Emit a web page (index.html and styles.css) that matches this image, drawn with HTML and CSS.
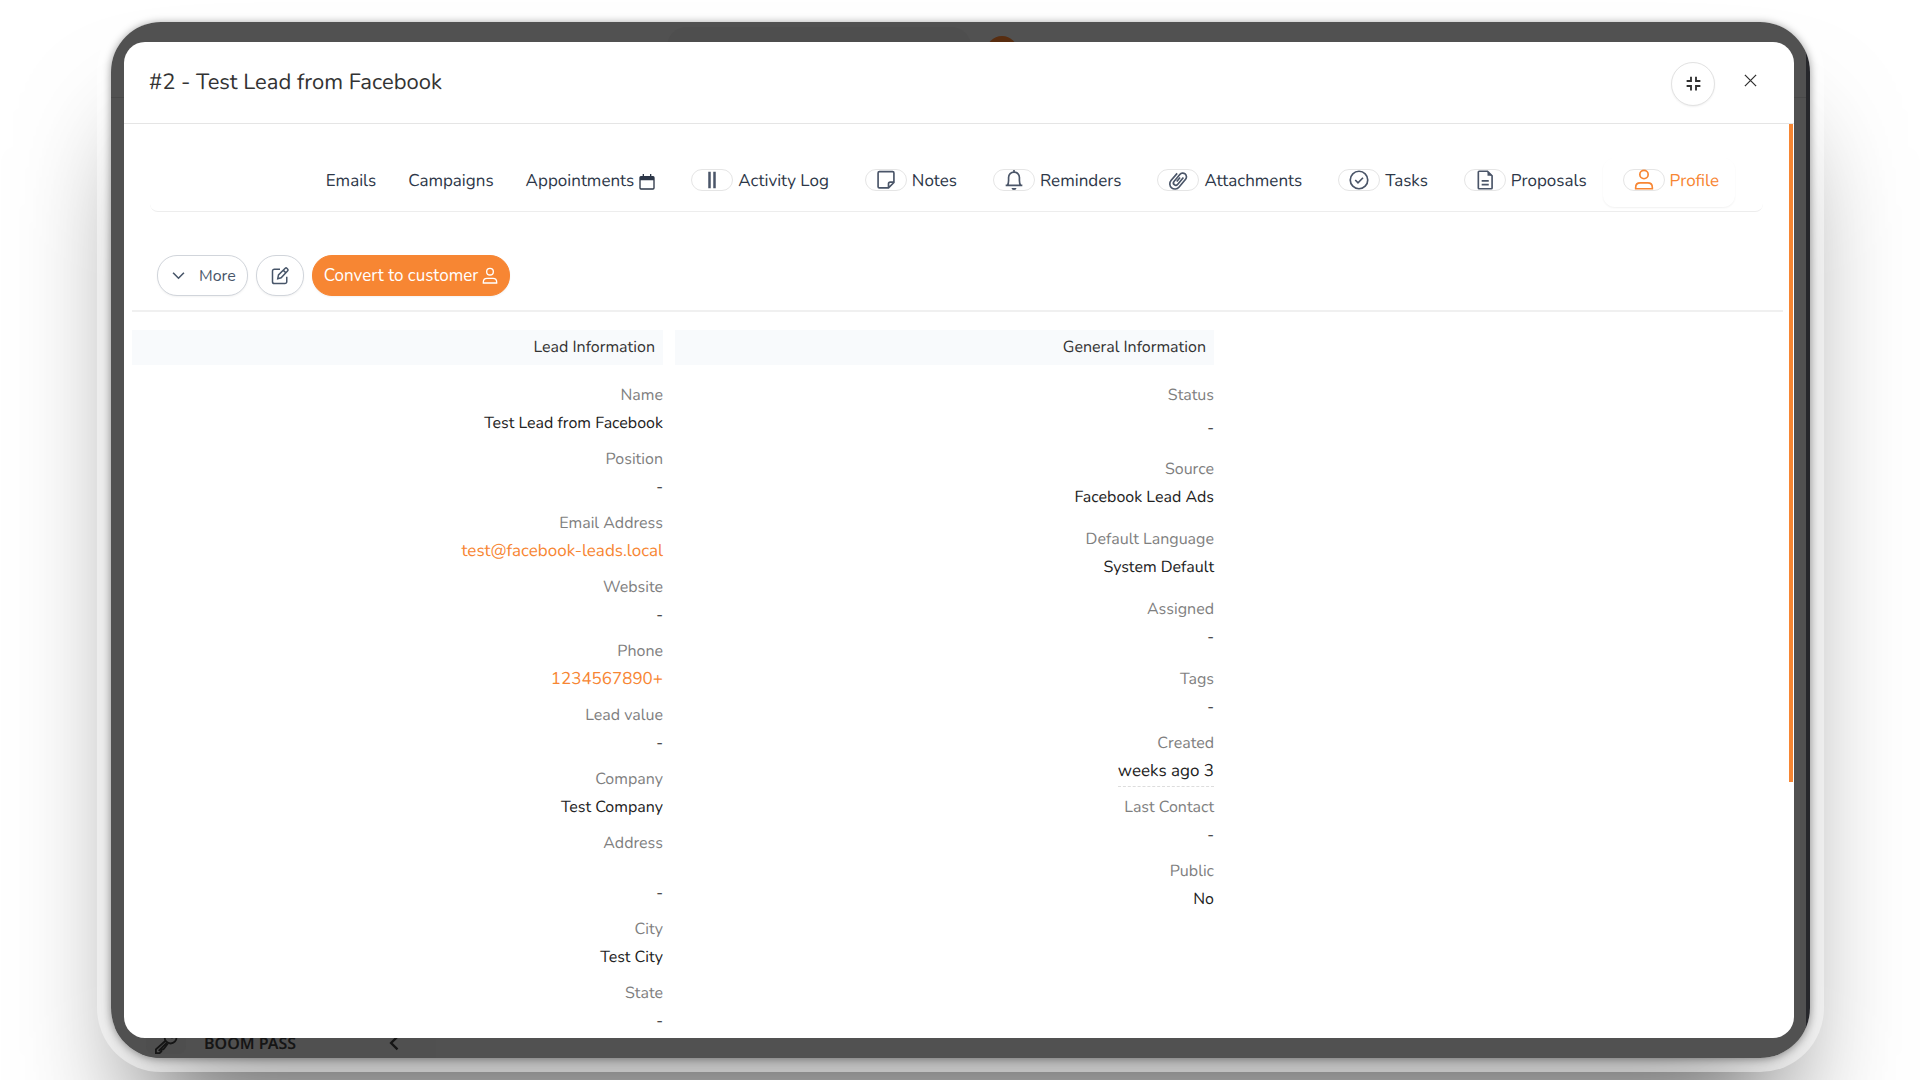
FILE: index.html
```html
<!DOCTYPE html>
<html lang="en">
<head>
    <meta charset="UTF-8">
    <meta name="viewport" content="width=device-width, initial-scale=1.0">
    <title>#2 - Test Lead from Facebook</title>
    <link rel="stylesheet" href="styles.css">
</head>
<body>

    <div class="frame">
        <!-- CRM page behind the modal -->
        <div class="app">
            <div class="topbar">
                <div class="search"></div>
                <div class="add"></div>
            </div>
            <div class="sidebar">
                <a href="#" class="menu-item">
                    <span class="menu-icon">
                        <svg viewBox="0 0 24 24"><circle cx="17" cy="6" r="6.500"/><path d="M11.500 9.500 1 19v4h4l2-2v-2h2l1-1 4-5.500M4 20.500l9-9"/><circle cx="18.500" cy="4.500" r="1.500"/></svg>
                    </span>
                    <span>BOOM PASS</span>
                    <svg class="menu-arrow" viewBox="0 0 24 24"><path d="M18 1 7 12l11 11"/></svg>
                </a>
            </div>
        </div>

        <div class="modal" role="dialog" aria-labelledby="lead-title">
            <div class="modal-header">
                <h4 id="lead-title">#2 - Test Lead from Facebook</h4>
                <button type="button" class="shrink" aria-label="Shrink">
                    <svg viewBox="0 0 24 24"><path d="M8 1v7H1M16 1v7h7M8 23v-7H1M16 23v-7h7"/></svg>
                </button>
                <button type="button" class="close" aria-label="Close">
                    <svg viewBox="0 0 24 24"><path d="M3 3l18 18M21 3 3 21"/></svg>
                </button>
            </div>

            <div class="modal-body">
                <nav class="tabs">
                    <a href="#">Emails</a>
                    <a href="#">Campaigns</a>
                    <a href="#">Appointments
                        <svg class="calendar" viewBox="0 0 24 24"><path d="M3 4h18a1.500 1.500 0 0 1 1.500 1.500V21a1.500 1.500 0 0 1-1.500 1.500H3A1.500 1.500 0 0 1 1.500 21V5.500A1.500 1.500 0 0 1 3 4zM6.500 0v5M17.500 0v5"/><path class="solid" d="M1.500 4h21v5.500h-21z"/></svg>
                    </a>
                    <a href="#">
                        <span class="pill"><svg viewBox="0 0 24 24"><path class="thick" d="M9 2v20M15 2v20"/></svg></span>
                        Activity Log
                    </a>
                    <a href="#">
                        <span class="pill"><svg viewBox="0 0 24 24"><path d="M4 2h16a1.500 1.500 0 0 1 1.500 1.500V15L15 21.500H4A1.500 1.500 0 0 1 2.500 20V3.500A1.500 1.500 0 0 1 4 2zM21.500 14.500H17a2 2 0 0 0-2 2v5"/></svg></span>
                        Notes
                    </a>
                    <a href="#">
                        <span class="pill"><svg viewBox="0 0 24 24"><path d="M12 0v2.500M2 18.500h20M4 18.500c1-1.500 1.500-3 1.500-6V9a6.500 6.500 0 0 1 13 0v3.500c0 3 .5 4.500 1.500 6"/><path class="solid" d="M9 21.500h6a3 2.500 0 0 1-6 0z"/></svg></span>
                        Reminders
                    </a>
                    <a href="#">
                        <span class="pill"><svg viewBox="0 0 24 24"><path d="M18.500 9l-7 8.300a2.800 2.800 0 0 1-4.300-3.600l7-8.400a4.500 4.500 0 0 1 6.900 5.800l-8 9.500a6.200 6.200 0 0 1-9.500-8L11 4M14.500 9l-4 4.800"/></svg></span>
                        Attachments
                    </a>
                    <a href="#">
                        <span class="pill"><svg viewBox="0 0 24 24"><circle cx="12" cy="12" r="10.500"/><path d="M7.500 12l3.300 3.300 6-6"/></svg></span>
                        Tasks
                    </a>
                    <a href="#">
                        <span class="pill"><svg viewBox="0 0 24 24"><path d="M5 1.500h10l5.500 5.500v14.500a1 1 0 0 1-1 1H5a1 1 0 0 1-1-1v-19a1 1 0 0 1 1-1zM8 13h8.500M8 17.500h8.500"/><path class="solid" d="M15 1.500V7h5.500z"/></svg></span>
                        Proposals
                    </a>
                    <a href="#" class="active">
                        <span class="pill"><svg viewBox="0 0 24 24"><circle cx="12" cy="5.500" r="5"/><path d="M2 22.500v-1.500c0-3.500 2.500-5.500 5.500-5.500h9c3 0 5.500 2 5.500 5.500v1.500z"/></svg></span>
                        Profile
                    </a>
                </nav>

                <div class="actions">
                    <button type="button" class="btn more">
                        <svg class="caret" viewBox="0 0 24 24"><path d="M2 7l10 10L22 7"/></svg>
                        More
                    </button>
                    <button type="button" class="btn edit" aria-label="Edit">
                        <svg viewBox="0 0 24 24"><path d="M12 3H4.500A2.500 2.500 0 0 0 2 5.500v14A2.500 2.500 0 0 0 4.500 22h14a2.500 2.500 0 0 0 2.500-2.500V13M9 15.500l1-5L19 1.700a1.500 1.500 0 0 1 2.100 0l1.200 1.200a1.500 1.500 0 0 1 0 2.100L13.500 14.300zM16.500 4.500l3.200 3.200"/></svg>
                    </button>
                    <button type="button" class="btn convert">
                        Convert to customer
                        <svg viewBox="0 0 24 24"><circle cx="12" cy="5.500" r="5"/><path d="M2 22.500v-1.500c0-3.500 2.500-5.500 5.500-5.500h9c3 0 5.500 2 5.500 5.500v1.500z"/></svg>
                    </button>
                </div>

                <div class="info">
                    <section>
                        <h5>Lead Information</h5>
                        <dl>
                            <dt>Name</dt>
                            <dd>Test Lead from Facebook</dd>
                            <dt>Position</dt>
                            <dd>-</dd>
                            <dt>Email Address</dt>
                            <dd><a href="#">test@facebook-leads.local</a></dd>
                            <dt>Website</dt>
                            <dd>-</dd>
                            <dt>Phone</dt>
                            <dd><a href="#">1234567890+</a></dd>
                            <dt>Lead value</dt>
                            <dd>-</dd>
                            <dt>Company</dt>
                            <dd>Test Company</dd>
                            <dt>Address</dt>
                            <dd class="address">-</dd>
                            <dt>City</dt>
                            <dd>Test City</dd>
                            <dt>State</dt>
                            <dd>-</dd>
                        </dl>
                    </section>
                    <section>
                        <h5>General Information</h5>
                        <dl>
                            <dt>Status</dt>
                            <dd class="status">-</dd>
                            <dt>Source</dt>
                            <dd class="spaced">Facebook Lead Ads</dd>
                            <dt>Default Language</dt>
                            <dd class="spaced">System Default</dd>
                            <dt>Assigned</dt>
                            <dd class="spaced">-</dd>
                            <dt>Tags</dt>
                            <dd>-</dd>
                            <dt>Created</dt>
                            <dd><span class="time-ago">weeks ago 3</span></dd>
                            <dt>Last Contact</dt>
                            <dd>-</dd>
                            <dt>Public</dt>
                            <dd>No</dd>
                        </dl>
                    </section>
                </div>

                <div class="scrollbar"></div>
            </div>
        </div>
    </div>

</body>
</html>
```

FILE: styles.css
```css
* {
    box-sizing: border-box;
}
body {
    margin: 0;
    padding: 22px 110px 22px 111px;
    height: 100vh;
    overflow: hidden;
    background: #fff;
    font-family: Nunito, Lato, sans-serif;
    font-size: 17px;
    line-height: 28px;
    color: #222;
    text-rendering: geometricPrecision;
}
a {
    color: #f78633;
    text-decoration: none;
}
svg {
    width: 18px;
    height: 18px;
    flex-shrink: 0;
    fill: none;
    stroke: currentColor;
    stroke-width: 2;
    overflow: visible;
}
svg .solid {
    fill: currentColor;
    stroke: none;
}
svg .thick {
    stroke-width: 3;
}
button {
    font: inherit;
    cursor: pointer;
}

/* device frame */
.frame {
    display: grid;
    grid-template: minmax(0, 1fr) / minmax(0, 1fr);
    height: 100%;
    border-radius: 50px;
    background: linear-gradient(to left, #26272b 4px, #515151 4px);
    overflow: hidden;
    box-shadow:
        0 1px 8px rgba(0, 0, 0, 0.4),
        0 0 0 14px rgba(255, 255, 255, 0.45),
        0 90px 120px -34px rgba(0, 0, 0, 0.6);
}
.app,
.modal {
    grid-area: 1 / 1;
}
.app {
    display: flex;
    flex-direction: column;
    justify-content: space-between;
    margin-right: 4px;
}
.topbar {
    display: flex;
    align-items: flex-start;
    gap: 15px;
    height: 76px;
    padding: 5px 0 0 556px;
    border-bottom: 1px solid #494949;
}
.search {
    width: 304px;
    height: 50px;
    border-radius: 20px;
    background: #4e4e4e;
}
.add {
    width: 32px;
    height: 32px;
    margin-top: 9px;
    border-radius: 50%;
    background: #582d10;
}
.sidebar {
    width: 325px;
    padding: 0 35px;
    background: #505050;
}
.menu-item {
    display: flex;
    align-items: center;
    height: 30px;
    font: 600 16px/30px "Noto Sans", sans-serif;
    color: #151515;
}
.menu-icon {
    display: flex;
    justify-content: center;
    width: 40px;
    margin-right: 18px;
    border-radius: 8px;
    background: #4e4e4e;
}
.menu-icon svg {
    width: 22px;
    height: 22px;
    stroke-width: 2;
}
.menu-arrow {
    width: 14px;
    height: 14px;
    margin-left: auto;
    stroke-width: 4;
}

/* modal */
.modal {
    display: flex;
    flex-direction: column;
    margin: 20px 16px 20px 13px;
    border-radius: 21px;
    background: #fff;
    overflow: hidden;
}
.modal-header {
    display: flex;
    align-items: center;
    height: 82px;
    padding: 0 36px 2px 25px;
    border-bottom: 1px solid #e5e5e5;
    flex-shrink: 0;
}
.modal-header h4 {
    margin: 0 auto 0 0;
    font-size: 22px;
    font-weight: 400;
    color: #333;
}
.shrink {
    display: flex;
    align-items: center;
    justify-content: center;
    width: 44px;
    height: 44px;
    margin-top: 4px;
    border: 1px solid #e2e2e2;
    border-radius: 50%;
    background: #fff;
    color: #333;
    box-shadow: 0 1px 2px rgba(0, 0, 0, 0.06);
}
.shrink svg {
    width: 15px;
    height: 15px;
    stroke-width: 3;
}
.close {
    display: flex;
    margin: 0 0 2px 28px;
    padding: 0;
    border: 0;
    background: none;
    color: #333;
}
.close svg {
    width: 15px;
    height: 15px;
    stroke-width: 2;
}
.modal-body {
    position: relative;
    flex: 1;
    min-height: 0;
    padding: 34px 11px 0 8px;
}

/* tabs */
.tabs {
    display: flex;
    justify-content: flex-end;
    height: 54px;
    margin: 0 20px 0 18px;
    padding: 0 28px 4px 0;
    border-bottom: 1px solid #ededed;
    border-radius: 8px;
}
.tabs a {
    display: flex;
    align-items: center;
    gap: 5px;
    padding: 0 16px 1px;
    border-radius: 12px;
    color: #2d3748;
    white-space: nowrap;
}
.tabs .active {
    color: #f78633;
    box-shadow: 0 1px 2px rgba(0, 0, 0, 0.06);
}
.tabs .calendar {
    width: 16px;
    height: 16px;
}
.pill {
    display: flex;
    align-items: center;
    justify-content: center;
    width: 42px;
    height: 22px;
    margin: 0 0 4px 4px;
    border: 1px solid #e5e5e5;
    border-radius: 11px;
    color: #4a5568;
}
.pill svg {
    width: 20px;
    height: 20px;
}
.active .pill {
    color: #f78633;
}

/* action buttons */
.actions {
    display: flex;
    gap: 8px;
    padding: 43px 0 14px 25px;
    border-bottom: 2px solid #f0f0f0;
}
.btn {
    display: flex;
    align-items: center;
    height: 41px;
    padding: 0 11px;
    border: 1px solid #d1d5db;
    border-radius: 20px;
    background: #fff;
    color: #475569;
    box-shadow: 0 1px 2px rgba(0, 0, 0, 0.05);
}
.more {
    gap: 14px;
    padding-left: 14px;
    font-size: 16px;
}
.caret {
    width: 13px;
    height: 13px;
    stroke-width: 3;
}
.edit {
    padding: 0 14px;
}
.convert {
    gap: 4px;
    border-color: #f78633;
    background: #f78633;
    color: #fff;
}
.convert svg {
    width: 16px;
}

/* lead details */
.info {
    display: grid;
    grid-template-columns: 531fr 539fr 557fr;
    gap: 12px;
    padding-top: 18px;
    font-size: 16px;
    text-align: right;
}
.info h5 {
    margin: 0 0 16px;
    padding: 3px 8px;
    height: 35px;
    background: #f8fafc;
    font-size: 16px;
    font-weight: 400;
    color: #333;
}
.info dl {
    margin: 0;
}
.info dt {
    color: #7f7f7f;
}
.info dd {
    height: 28px;
    margin: 0 0 8px;
}
.info dd a,
.time-ago {
    font-size: 17px;
}
.info .address {
    height: 50px;
    padding-top: 22px;
}
.info .status {
    height: 38px;
    padding: 5px 0;
}
.info .spaced {
    margin-bottom: 14px;
}
.time-ago {
    display: inline-block;
    border-bottom: 1px dashed #ddd;
}

.scrollbar {
    position: absolute;
    top: 0;
    right: 1px;
    width: 4px;
    height: 72%;
    background: #f78633;
}
```
